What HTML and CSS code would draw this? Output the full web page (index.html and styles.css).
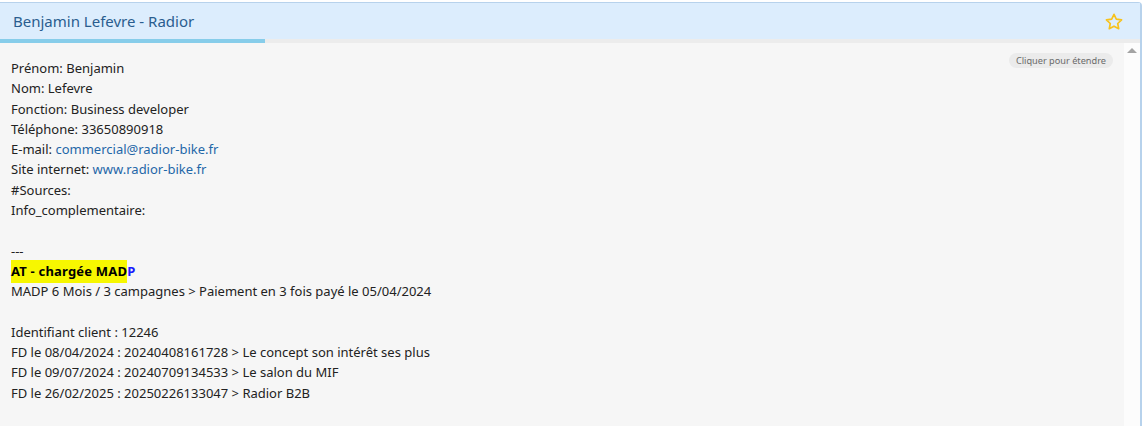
FILE: index.html
```html
<!DOCTYPE html>
<html lang="fr">
<head>
<meta charset="utf-8">
<link rel="stylesheet" href="styles.css">
</head>
<body>
<div class="panel">
  <div class="panel-head">
    <span class="panel-title">Benjamin Lefevre - Radior</span>
    <svg class="star" width="20" height="20" viewBox="0 0 24 24"><path d="M12 2.8l2.75 5.8 6.35.8-4.65 4.4 1.2 6.3L12 17l-5.65 3.1 1.2-6.3L2.9 9.4l6.35-.8z" fill="none" stroke="#f7c21c" stroke-width="2" stroke-linejoin="round"/></svg>
  </div>
  <div class="progress"><div class="progress-fill"></div></div>
  <div class="panel-body">
    <div class="content">
      <span class="expand">Cliquer pour étendre</span>
      <div class="line">Prénom: Benjamin</div>
      <div class="line">Nom: Lefevre</div>
      <div class="line">Fonction: Business developer</div>
      <div class="line">Téléphone: 33650890918</div>
      <div class="line">E-mail: <a class="link">commercial@radior-bike.fr</a></div>
      <div class="line">Site internet: <a class="link">www.radior-bike.fr</a></div>
      <div class="line">#Sources:</div>
      <div class="line">Info_complementaire:</div>
      <div class="line">&nbsp;</div>
      <div class="line">---</div>
      <div class="line bold"><span class="hl">AT - chargée MAD</span><span class="blue">P</span></div>
      <div class="line">MADP 6 Mois / 3 campagnes &gt; Paiement en 3 fois payé le 05/04/2024</div>
      <div class="line">&nbsp;</div>
      <div class="line">Identifiant client : 12246</div>
      <div class="line">FD le 08/04/2024 : 20240408161728 &gt; Le concept son intérêt ses plus</div>
      <div class="line">FD le 09/07/2024 : 20240709134533 &gt; Le salon du MIF</div>
      <div class="line">FD le 26/02/2025 : 20250226133047 &gt; Radior B2B</div>
    </div>
    <div class="scrollbar"><span class="arrow-up"></span></div>
  </div>
</div>
</body>
</html>
```
FILE: styles.css
```css
html, body {
  margin: 0;
  padding: 0;
  background: #ffffff;
  height: 100%;
  overflow: hidden;
}
body {
  font-family: "Noto Sans", "Open Sans", sans-serif;
  color: #222222;
  padding-top: 2px;
}
.panel {
  border-top: 1px solid #b7d2ec;
  border-right: 2px solid #b7d2ec;
  border-top-right-radius: 4px;
  height: 430px;
  display: flex;
  flex-direction: column;
  margin-right: 1px;
}
.panel-head {
  background: #dcedfd;
  height: 36px;
  display: flex;
  align-items: center;
  justify-content: space-between;
  padding: 0 16px 0 13px;
}
.panel-title {
  font-size: 15px;
  color: #2a5d8f;
}
.star {
  display: block;
  margin-top: 1px;
}
.progress {
  height: 4px;
  background: #ececec;
}
.progress-fill {
  width: 265px;
  height: 100%;
  background: #87cdea;
}
.panel-body {
  flex: 1;
  display: flex;
  background: #f6f6f6;
}
.content {
  flex: 1;
  position: relative;
  padding: 15px 0 0 11px;
  font-size: 13px;
  line-height: 20.3px;
}
.expand {
  position: absolute;
  top: 10px;
  right: 11px;
  background: #ebebeb;
  color: #6a6a6a;
  font-size: 9.2px;
  line-height: 15px;
  padding: 0 7px;
  border-radius: 8px;
}
.link {
  color: #1f67a8;
  text-decoration: none;
}
.bold {
  font-weight: bold;
  color: #000000;
  letter-spacing: 0.2px;
}
.hl {
  background: #f7f700;
  padding: 2px 0 3px 0;
}
.blue {
  color: #1a1aff;
}
.scrollbar {
  width: 16px;
  background: #fcfcfc;
  display: flex;
  justify-content: center;
  padding-top: 5px;
}
.arrow-up {
  width: 0;
  height: 0;
  border-left: 5px solid transparent;
  border-right: 5px solid transparent;
  border-bottom: 5px solid #a3a3a3;
}
```
